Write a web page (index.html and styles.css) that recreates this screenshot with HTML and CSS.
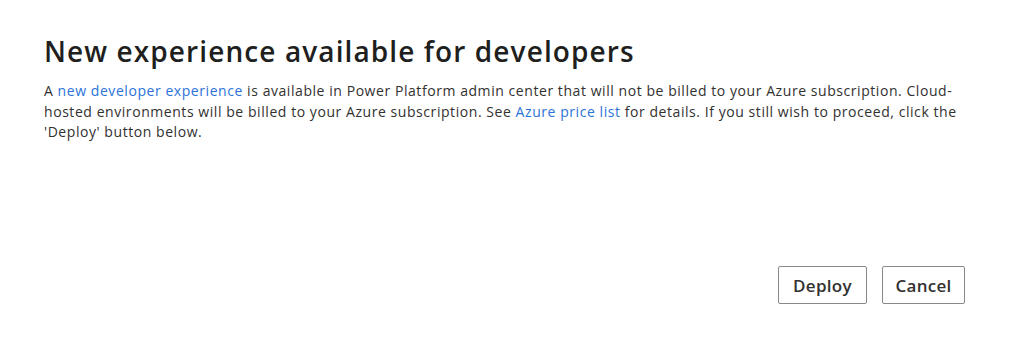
FILE: index.html
```html
<!DOCTYPE html>
<html lang="en">
<head>
<meta charset="utf-8">
<title>New experience available for developers</title>
<link rel="stylesheet" href="styles.css">
</head>
<body>
<div class="dialog">
  <div class="content">
    <h1 class="title">New experience available for developers</h1>
    <p class="text">A <a class="link" href="#">new developer experience</a> is available in Power Platform admin center that will not be billed to your Azure subscription. Cloud-hosted environments will be billed to your Azure subscription. See <a class="link" href="#">Azure price list</a> for details. If you still wish to proceed, click the 'Deploy' button below.</p>
  </div>
  <div class="actions">
    <button class="btn btn-deploy">Deploy</button>
    <button class="btn btn-cancel">Cancel</button>
  </div>
</div>
</body>
</html>
```
FILE: styles.css
```css
html, body {
  margin: 0;
  padding: 0;
  background: #ffffff;
}
body {
  font-family: "Open Sans", "Noto Sans", "Liberation Sans", sans-serif;
  color: #323130;
}
.dialog {
  box-sizing: border-box;
  height: 345px;
  padding: 32px 58px 41px 44px;
  display: flex;
  flex-direction: column;
  justify-content: space-between;
}
.title {
  margin: 0;
  font-size: 28px;
  font-weight: 600;
  line-height: 38px;
  color: #201f1e;
  letter-spacing: 1.1px;
}
.text {
  margin: 11px 0 0;
  font-size: 14px;
  line-height: 20.5px;
  color: #323130;
  letter-spacing: 0.56px;
}
.link {
  color: #2b73d8;
  text-decoration: none;
}
.actions {
  display: flex;
  justify-content: flex-end;
  gap: 15px;
}
.btn {
  box-sizing: border-box;
  font-family: inherit;
  font-size: 17px;
  font-weight: 600;
  color: #323130;
  background: #ffffff;
  border: 1px solid #8a8886;
  border-radius: 2px;
  height: 38px;
  padding: 0;
  letter-spacing: 0.3px;
}
.btn-deploy {
  width: 89px;
}
.btn-cancel {
  width: 83px;
}
```
